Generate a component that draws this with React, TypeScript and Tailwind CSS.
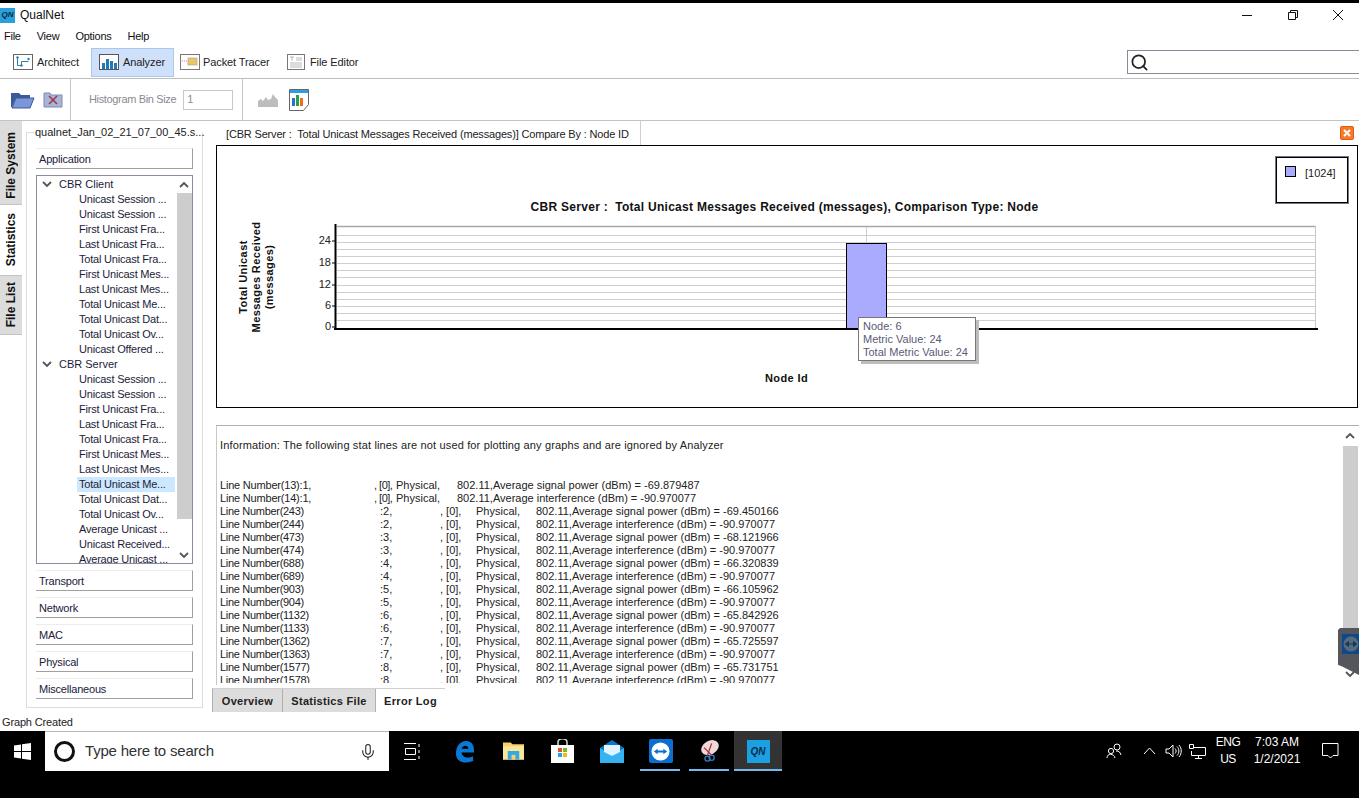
import React from "react";
import { Search, Mic } from "lucide-react";

const F = "font-['Liberation_Sans',Arial,sans-serif]";

const client = ["Unicast Session ...","Unicast Session ...","First Unicast Fra...","Last Unicast Fra...","Total Unicast Fra...","First Unicast Mes...","Last Unicast Mes...","Total Unicast Me...","Total Unicast Dat...","Total Unicast Ov...","Unicast Offered ..."];
const server = ["Unicast Session ...","Unicast Session ...","First Unicast Fra...","Last Unicast Fra...","Total Unicast Fra...","First Unicast Mes...","Last Unicast Mes...","Total Unicast Me...","Total Unicast Dat...","Total Unicast Ov...","Average Unicast ...","Unicast Received...","Average Unicast ..."];

const logRows: [string,string,string][] = [
["243","2","Average signal power (dBm) = -69.450166"],["244","2","Average interference (dBm) = -90.970077"],
["473","3","Average signal power (dBm) = -68.121966"],["474","3","Average interference (dBm) = -90.970077"],
["688","4","Average signal power (dBm) = -66.320839"],["689","4","Average interference (dBm) = -90.970077"],
["903","5","Average signal power (dBm) = -66.105962"],["904","5","Average interference (dBm) = -90.970077"],
["1132","6","Average signal power (dBm) = -65.842926"],["1133","6","Average interference (dBm) = -90.970077"],
["1362","7","Average signal power (dBm) = -65.725597"],["1363","7","Average interference (dBm) = -90.970077"],
["1577","8","Average signal power (dBm) = -65.731751"],["1578","8","Average interference (dBm) = -90.970077"],
];

function Chevron({ up, className }: { up?: boolean; className?: string }) {
  return (
    <svg width="10" height="7" viewBox="0 0 10 7" className={className}>
      <path d={up ? "M1 6 L5 2 L9 6" : "M1 1 L5 5 L9 1"} fill="none" stroke="#555" strokeWidth="1.8" />
    </svg>
  );
}

function Acc({ label, className }: { label: string; className?: string }) {
  return (
    <div className={`h-[21px] w-[157px] ml-[9px] border-r border-b border-t border-r-[#a0a0a0] border-b-[#a0a0a0] border-t-[#ececec] pl-[3px] pt-[1px] flex items-center tracking-[-0.2px] text-[#20203a] ${className ?? ""}`}>
      {label}
    </div>
  );
}

function TreeRow({ label, selected }: { label: string; selected?: boolean }) {
  return (
    <div className={`h-[15px] leading-[15px] ml-[40px] pl-[2px] w-[98px] whitespace-nowrap tracking-[-0.2px] text-[#1c1c3a] ${selected ? "bg-[#cce8ff]" : ""}`}>{label}</div>
  );
}

function TreeHead({ label }: { label: string }) {
  return (
    <div className="h-[15px] leading-[15px] flex items-center text-[#1c1c3a]">
      <Chevron className="ml-[5px] mr-[7px]" />
      <span>{label}</span>
    </div>
  );
}

function SideTab({ label, h, active }: { label: string; h: string; active?: boolean }) {
  return (
    <div className={`${h} w-[22px] flex items-center justify-center ${active ? "bg-white" : "bg-[#dcdcdc]"} border-b border-[#c4c4c4]`}>
      <span className="[writing-mode:vertical-rl] rotate-180 font-bold text-[12px] whitespace-nowrap text-[#111]">{label}</span>
    </div>
  );
}

function Chart() {
  const grid: number[] = [];
  for (let i = 0; i < 13; i++) grid.push(235.5 + Math.round(i * 7.08));
  return (
    <svg width="1140" height="261" viewBox="217 146 1140 261" className="block" fontFamily="'Liberation Sans',Arial,sans-serif">
      <text x="784.5" y="211" textAnchor="middle" fontSize="12" fontWeight="700" fill="#111" xmlSpace="preserve" letterSpacing="0.28">CBR Server :  Total Unicast Messages Received (messages), Comparison Type: Node</text>
      <line x1="337" x2="1316" y1="226.5" y2="226.5" stroke="#a8a8a8" strokeWidth="1.5" />
      <line x1="1315.5" x2="1315.5" y1="226" y2="328" stroke="#c8c8c8" />
      {grid.map((y) => <line key={y} x1="337" x2="1315" y1={y} y2={y} stroke="#cfcfcf" />)}
      <line x1="866.5" x2="866.5" y1="227" y2="243" stroke="#cfcfcf" />
      <rect x="846.5" y="243.5" width="40" height="86" fill="#aaaaff" stroke="#000" />
      <line x1="335.5" x2="335.5" y1="224" y2="330" stroke="#000" strokeWidth="2" />
      <line x1="334" x2="1318" y1="329" y2="329" stroke="#000" strokeWidth="2" />
      {[[241,"24"],[263,"18"],[285,"12"],[306,"6"],[327,"0"]].map(([y,t]) => (
        <g key={String(t)}>
          <text x="331" y={Number(y)+3} textAnchor="end" fontSize="11" fill="#222">{t}</text>
          <line x1="332" x2="335" y1={Number(y)} y2={Number(y)} stroke="#000" />
        </g>
      ))}
      <g transform="rotate(-90 247 277)" fontSize="11" fontWeight="700" fill="#111" textAnchor="middle" letterSpacing="0.4">
        <text x="247" y="277">Total Unicast</text>
        <text x="247" y="290">Messages Received</text>
        <text x="247" y="303">(messages)</text>
      </g>
      <text x="786.5" y="382" textAnchor="middle" fontSize="11" fontWeight="700" fill="#111" letterSpacing="0.4">Node Id</text>
    </svg>
  );
}

function TaskIcon({ children, active, bar, w = "w-[49px]" }: { children: React.ReactNode; active?: boolean; bar?: "short" | "full"; w?: string }) {
  return (
    <div className={`${w} h-[40px] flex items-center justify-center relative ${active ? "bg-[#333333]" : ""}`}>
      {children}
      {bar === "short" && <div className="absolute bottom-0 left-[4px] w-[40px] h-[2px] bg-[#76b9ed]" />}
      {bar === "full" && <div className="absolute bottom-0 left-0 right-0 h-[2px] bg-[#76b9ed]" />}
    </div>
  );
}

export default function App() {
  return (
    <div className={`${F} w-[1359px] h-[798px] overflow-hidden flex flex-col bg-white text-[11px] text-[#1c1c2e] relative`}>
      <div className="h-[3px] bg-black shrink-0" />
      {/* title */}
      <div className="h-[24px] flex items-center shrink-0">
        <div className="w-[15px] h-[15px] bg-[#2a9fd8] text-[8px] font-bold italic text-[#0b2a4a] flex items-center justify-center">QN</div>
        <span className="ml-[5px] text-[12px] text-[#111]">QualNet</span>
        <div className="ml-auto flex items-center">
          <svg width="12" height="12" viewBox="0 0 12 12" className="mr-[34px]"><line x1="1" x2="11" y1="6.5" y2="6.5" stroke="#111" /></svg>
          <svg width="12" height="12" viewBox="0 0 12 12" className="mr-[33px]"><path d="M1.500 3.500h7v7h-7z M3.500 3.500v-2h7v7h-2" fill="none" stroke="#111" /></svg>
          <svg width="12" height="12" viewBox="0 0 12 12" className="mr-[15px]"><path d="M1 1L11 11M11 1L1 11" stroke="#111" /></svg>
        </div>
      </div>
      {/* menu */}
      <div className="h-[19px] flex items-center shrink-0 text-[11px] text-[#111] tracking-[-0.25px]">
        <span className="ml-[4px]">File</span><span className="ml-[16px]">View</span><span className="ml-[16px]">Options</span><span className="ml-[16px]">Help</span>
      </div>
      {/* toolbar 1 */}
      <div className="h-[33px] flex items-center shrink-0 border-b border-[#bdbdbd] relative tracking-[-0.1px]">
        <div className="ml-[13px] flex items-center w-[78px]">
          <svg width="20" height="16" viewBox="0 0 20 16"><rect x=".5" y=".5" width="19" height="15" fill="#fff" stroke="#666" /><path d="M4.500 3.500v8h4v-4h7" fill="none" stroke="#2a7fb0" strokeWidth="1" /><circle cx="4.500" cy="3.500" r="1.200" fill="#2a7fb0" /><circle cx="15.500" cy="5" r="1.200" fill="#2a7fb0" /><circle cx="8.500" cy="11.500" r="1.200" fill="#2a7fb0" /></svg>
          <span className="ml-[4px] text-[#222]">Architect</span>
        </div>
        <div className="w-[83px] h-[29px] bg-[#cfe0fa] border border-[#a9c8f0] flex items-center pl-[7px]">
          <svg width="20" height="16" viewBox="0 0 20 16"><rect x=".5" y=".5" width="19" height="15" fill="#fff" stroke="#555" /><path d="M3 9h3v6H3zM7 5h3v10H7zM11 7h3v8h-3zM15 9h3v6h-3z" fill="#1f7ab8" /></svg>
          <span className="ml-[4px] mt-[1px] text-[#222]">Analyzer</span>
        </div>
        <div className="ml-[6px] flex items-center w-[107px]">
          <svg width="20" height="16" viewBox="0 0 20 16"><rect x=".5" y=".5" width="19" height="15" fill="#fff" stroke="#777" /><rect x="8" y="4" width="9" height="7" fill="#e8c66a" stroke="#a98" strokeWidth=".6" /><path d="M2 7h5" stroke="#e77" strokeDasharray="1 1" /></svg>
          <span className="ml-[3px] text-[#222]">Packet Tracer</span>
        </div>
        <div className="flex items-center">
          <svg width="18" height="16" viewBox="0 0 18 16"><rect x=".5" y=".5" width="17" height="15" fill="#fff" stroke="#777" /><path d="M3 3h4M5 3v4M9 4h6M9 6h6M3 9h12M3 11h12M3 13h12" stroke="#a8a8a8" strokeWidth=".8" /></svg>
          <span className="ml-[5px] text-[#222]">File Editor</span>
        </div>
        <div className="ml-auto w-[232px] h-[24px] border-y border-l border-[#8a8a9a] flex items-center pl-[2px]">
          <Search size={19} strokeWidth={2.2} className="text-[#222]" />
        </div>
      </div>
      {/* toolbar 2 */}
      <div className="h-[42px] flex items-center shrink-0 border-b border-[#c4c4c4]">
        <div className="w-[71px] h-full border-r border-[#c4c4c4] flex items-center pl-[10px] gap-[8px]">
          <svg width="25" height="18" viewBox="0 0 25 18"><path d="M1 2h8l2 2h9v3H6L2 16H1z" fill="#3c5a9a" /><path d="M6 7h18l-4 10H2z" fill="#7a98d8" stroke="#3c5a9a" /></svg>
          <svg width="20" height="16" viewBox="0 0 20 16"><path d="M1 1h6l1 2h11v12H1z" fill="#a8b4d8" stroke="#8088a8" /><path d="M6 4l8 8M14 4l-8 8" stroke="#9a3a4a" strokeWidth="1.6" /></svg>
        </div>
        <div className="w-[172px] h-full border-r border-[#c4c4c4] flex items-center pl-[18px]">
          <span className="text-[#8a8a92] tracking-[-0.35px]">Histogram Bin Size</span>
          <div className="ml-[7px] w-[50px] h-[20px] border border-[#c8c8c8] pl-[3px] flex items-center text-[#8a8a92]">1</div>
        </div>
        <div className="ml-[15px]">
          <svg width="20" height="16" viewBox="0 0 20 16"><path d="M0 15V9l3-2 2 2 3-4 2 3 3-1 2-5 2 3 3 3v7z" fill="#bdbdbd" /></svg>
        </div>
        <div className="ml-[11px]">
          <svg width="20" height="22" viewBox="0 0 20 22"><path d="M.5.500h19v15l-5 6H.5z" fill="#fff" stroke="#666" /><rect x="1" y="1" width="18" height="3" fill="#2a9fe8" /><rect x="3" y="9" width="3" height="8" fill="#2a6fd0" /><rect x="7" y="6" width="3" height="11" fill="#2aa040" /><rect x="11" y="9" width="3" height="8" fill="#e87020" /></svg>
        </div>
      </div>
      {/* main */}
      <div className="flex-1 min-h-0 flex relative">
        <div className="w-[22px] shrink-0 flex flex-col">
          <SideTab label="File System" h="h-[84px] pt-[5px]" />
          <SideTab label="Statistics" h="h-[71px]" active />
          <SideTab label="File List" h="h-[59px]" />
        </div>
        {/* stats group */}
        <div className="w-[177px] ml-[4px] mt-[11px] h-[576px] border border-[#dcdcdc] shrink-0 relative">
          <div className="absolute -top-[8px] left-[7px] right-0 bg-white h-[14px] leading-[14px] pl-[1px] whitespace-nowrap text-[#222]">qualnet_Jan_02_21_07_00_45.s...</div>
          <div className="pt-[15px]" />
          <Acc label="Application" />
          <div className="ml-[9px] mt-[6px] w-[157px] h-[389px] border border-[#8a8aa0] pt-[1px] relative overflow-hidden">
            <TreeHead label="CBR Client" />
            {client.map((c, i) => <TreeRow key={i} label={c} />)}
            <TreeHead label="CBR Server" />
            {server.map((c, i) => <TreeRow key={i} label={c} selected={i === 7} />)}
            <div className="absolute right-0 top-0 bottom-0 w-[16px] bg-white flex flex-col items-center">
              <Chevron up className="mt-[5px]" />
              <div className="mt-[5px] w-[15px] h-[326px] bg-[#cdcdcd]" />
              <Chevron className="mt-auto mb-[4px]" />
            </div>
          </div>
          <Acc label="Transport" className="mt-[6px]" />
          <Acc label="Network" className="mt-[6px]" />
          <Acc label="MAC" className="mt-[6px]" />
          <Acc label="Physical" className="mt-[6px]" />
          <Acc label="Miscellaneous" className="mt-[6px]" />
        </div>
        {/* right */}
        <div className="flex-1 min-w-0 ml-[9px] flex flex-col relative">
          <div className="h-[24px] flex shrink-0 relative">
            <div className="w-[429px] border-r border-[#d0d0d0] pl-[14px] pt-[2px] flex items-center whitespace-pre tracking-[-0.17px] text-[#222]">[CBR Server :  Total Unicast Messages Received (messages)] Compare By : Node ID</div>
            <div className="ml-auto mr-[5px] mt-[5px] w-[14px] h-[14px] rounded-[2px] bg-[#f77a2a] border border-[#e05a10] flex items-center justify-center">
              <svg width="8" height="8" viewBox="0 0 8 8"><path d="M1 1l6 6M7 1L1 7" stroke="#fff" strokeWidth="2" /></svg>
            </div>
          </div>
          <div className="ml-[4px] mr-[1px] h-[263px] border border-black shrink-0 relative bg-white">
            <Chart />
            <div className="absolute left-[1059px] top-[11px] w-[72px] h-[46px] border border-black outline outline-1 outline-[#77778a] flex pt-[8px] pl-[8px]">
              <div className="w-[11px] h-[11px] bg-[#aaaaff] border border-black" />
              <span className="ml-[9px] -mt-[1px] text-[#222]">[1024]</span>
            </div>
            <div className="absolute left-[641px] top-[171px] w-[118px] h-[44px] bg-white border border-[#777] shadow-[3px_3px_0_#bdbdbd] px-[4px] pt-[2px] text-[#5a5a78] leading-[13px] whitespace-nowrap">
              <div>Node: 6</div><div>Metric Value: 24</div><div>Total Metric Value: 24</div>
            </div>
          </div>
          <div className="mt-[17px] h-[260px] border-t border-[#b0b0b0] flex shrink-0 border-l ml-[4px] border-l-[#c8c8c8]">
            <div className="flex-1 overflow-hidden pl-[3px] pt-[13px] mb-[2px] text-[#222] leading-[13px] whitespace-pre">
              <div className="tracking-[0.15px]">Information: The following stat lines are not used for plotting any graphs and are ignored by Analyzer</div>
              <div className="h-[27px]" />
              {[["13","Average signal power (dBm) = -69.879487"],["14","Average interference (dBm) = -90.970077"]].map(([n,t]) => (
                <div key={n} className="flex h-[13px]">
                  <span className="w-[154px] tracking-[-0.2px]">Line Number({n}):1,</span>
                  <span className="w-[22px] tracking-[-0.5px]">, [0],</span>
                  <span className="w-[61px]">Physical,</span>
                  <span>802.11,{t}</span>
                </div>
              ))}
              {logRows.map(([n,v,t]) => (
                <div key={n} className="flex h-[13px]">
                  <span className="w-[160px] tracking-[-0.3px]">Line Number({n})</span>
                  <span className="w-[60px]">:{v},</span>
                  <span className="w-[36px]">, [0],</span>
                  <span className="w-[60px]">Physical,</span>
                  <span>802.11,{t}</span>
                </div>
              ))}
            </div>
            <div className="w-[16px] mr-[1px] flex flex-col items-center shrink-0">
              <Chevron up className="mt-[6px]" />
              <div className="mt-[7px] w-[15px] h-[182px] bg-[#cdcdcd]" />
              <Chevron className="mt-auto mb-[7px]" />
            </div>
          </div>
          <div className="mt-[3px] h-[24px] flex font-bold text-[#222] border-t border-[#d0d0d0] w-[233px] tracking-[0.3px]">
            <div className="w-[71px] bg-[#dcdcdc] border-x border-[#b0b0b0] pt-[1px] flex items-center justify-center">Overview</div>
            <div className="w-[93px] bg-[#dcdcdc] border-r border-[#b0b0b0] pt-[1px] flex items-center justify-center">Statistics File</div>
            <div className="w-[69px] pt-[1px] flex items-center justify-center">Error Log</div>
          </div>
        </div>
        <div className="absolute right-0 top-[507px] w-[21px] h-[47px] bg-[#55555e] [clip-path:polygon(2px_0,100%_0,100%_100%,20%_82%,0_78%,0_2px)] pl-[4px] pt-[6px]">
          <div className="w-[17px] h-[20px] bg-[#0b4a8a] flex items-center justify-center">
            <svg width="16" height="16" viewBox="0 0 16 16"><circle cx="8" cy="8" r="7.5" fill="#5a6a7a" /><path d="M2.500 8h11M2.500 8l3-2.500v5zM13.500 8l-3-2.500v5z" fill="#0b3a6a" stroke="#0b3a6a" /></svg>
          </div>
        </div>
      </div>
      {/* status */}
      <div className="h-[19px] shrink-0 pl-[2px] pt-[1px] flex items-center text-[#222] tracking-[-0.15px]">Graph Created</div>
      {/* taskbar */}
      <div className="h-[67px] bg-black shrink-0 flex items-start text-white">
        <div className="w-[45px] h-[40px] flex items-center justify-center">
          <svg width="17" height="17" viewBox="0 0 17 17" fill="#fff"><path d="M0 2.400L7 1.400V8H0zM8 1.200L17 0V8H8zM0 9h7v6.600L0 14.600zM8 9h9v8l-9-1.200z" /></svg>
        </div>
        <div className="w-[344px] h-[40px] bg-white border-t border-[#b8b8b8] flex items-center text-[#333] text-[15px] tracking-[-0.2px]">
          <div className="ml-[9px] w-[21px] h-[21px] rounded-full border-[3px] border-[#111]" />
          <span className="ml-[10px]">Type here to search</span>
          <Mic size={18} strokeWidth={1.4} className="ml-auto mr-[12px] text-[#222]" />
        </div>
        <div className="w-[48px] h-[40px] flex items-center justify-center">
          <svg width="18" height="17" viewBox="0 0 18 17" fill="none" stroke="#fff"><path d="M0 .5h12M0 16.500h12M1.500 5.500h10v6h-10zM15 1v3M15 7v3M15 13v3" /></svg>
        </div>
        <div className="w-[3px]" />
        <TaskIcon><svg width="20" height="23" viewBox="0 0 21 24"><path d="M1 14C1 6 6 1 12 1c5 0 8 4 8 10v2H7c0 5 7 7 12 4v5c-7 3-18 2-18-8zM7 9h7c0-4-6-4-7 0z" fill="#0a78d7" /></svg></TaskIcon>
        <TaskIcon><svg width="21" height="18" viewBox="0 0 22 18"><path d="M0 0h8l2 2h12v16H0z" fill="#f6d365" /><path d="M0 4h22v14H0z" fill="#fbe79a" /><path d="M5 9h12v9H5z" fill="#35a9e8" /><path d="M9 13h4v5H9z" fill="#f6d365" /></svg></TaskIcon>
        <TaskIcon><svg width="23" height="24" viewBox="0 0 23 24"><path d="M7 6V3a4 3 0 0 1 9 0v3" fill="none" stroke="#ddd" strokeWidth="1.500" /><rect y="6" width="23" height="18" fill="#fff" /><rect x="7" y="9" width="4" height="4" fill="#e8502a" /><rect x="12" y="9" width="4" height="4" fill="#7cb82a" /><rect x="7" y="14" width="4" height="4" fill="#1ea5e8" /><rect x="12" y="14" width="4" height="4" fill="#f8b818" /></svg></TaskIcon>
        <TaskIcon><svg width="24" height="23" viewBox="0 0 24 23"><path d="M0 8L12 0l12 8v15H0z" fill="#0a74cf" /><path d="M0 8l12 8 12-8v15H0z" fill="#35b3f0" /><path d="M4 5h16v7l-8 4-8-4z" fill="#dff4ff" /></svg></TaskIcon>
        <TaskIcon bar="short"><div className="w-[24px] h-[24px] bg-[#0a6fd0] rounded-[2px] flex items-center justify-center"><svg width="19" height="19" viewBox="0 0 20 20"><circle cx="10" cy="10" r="9.500" fill="#fff" /><path d="M3 10l4-3v2h6V7l4 3-4 3v-2H7v2z" fill="#0a6fd0" /></svg></div></TaskIcon>
        <TaskIcon bar="short"><svg width="24" height="22" viewBox="0 0 24 26"><ellipse cx="12" cy="9" rx="11" ry="8" fill="#f0d8d8" transform="rotate(-30 12 9)" /><path d="M5 9l9 9M14 4l-5 14" stroke="#b03040" strokeWidth="1.500" /><circle cx="14" cy="21" r="3" fill="none" stroke="#3a7ac0" strokeWidth="1.500" /><circle cx="9" cy="22" r="3" fill="none" stroke="#3a7ac0" strokeWidth="1.500" /></svg></TaskIcon>
        <TaskIcon active bar="full" w="w-[48px]">
          <div className="w-[23px] h-[23px] bg-[#1ba1e2] flex items-center justify-center font-bold italic text-[10px] text-[#0b2a4a]">QN</div>
        </TaskIcon>
        <div className="ml-auto h-[40px] flex items-center text-[12px]">
          <svg width="16" height="16" viewBox="0 0 16 16" fill="none" stroke="#fff" className="mr-[21px]"><circle cx="11" cy="4" r="3" /><circle cx="5" cy="8" r="2.600" /><path d="M1 15c0-5 7-5 8 0M10 8c3 0 4 1 5 4" /></svg>
          <svg width="13" height="8" viewBox="0 0 13 8" fill="none" stroke="#fff" className="mr-[9px]"><path d="M1 7l5.500-6L12 7" /></svg>
          <svg width="17" height="14" viewBox="0 0 17 14" fill="none" stroke="#fff" className="mr-[7px]"><path d="M1 5h3l4-4v12L4 9H1zM10 4.500c1.500 1.500 1.500 3.500 0 5M12 2.500c2.500 2.500 2.500 6.500 0 9M14 1c3 3.500 3 8.500 0 12" /></svg>
          <svg width="17" height="15" viewBox="0 0 17 15" fill="none" stroke="#fff" className="mr-[9px]"><path d="M5 3.500h11.500v8h-14V7M9.500 11.500v3M6 14.500h7M.5.500h4v4h-4z" /></svg>
          <div className="w-[26px] text-center leading-[17px] tracking-[-0.5px]"><div>ENG</div><div>US</div></div>
          <div className="w-[48px] ml-[12px] text-center leading-[17px]"><div>7:03 AM</div><div>1/2/2021</div></div>
          <svg width="17" height="16" viewBox="0 0 17 16" fill="none" stroke="#fff" className="ml-[21px] mr-[20px]"><path d="M.5.500h15.500v12h-5l-2.500 2.500L6 12.500H.5z" /></svg>
        </div>
      </div>
    </div>
  );
}
